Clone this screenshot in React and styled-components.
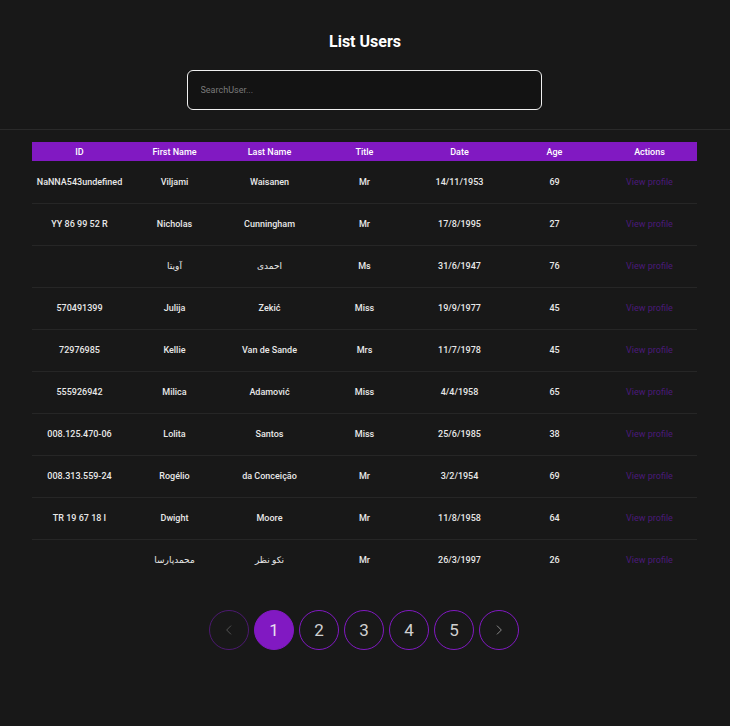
import React from "react";
import styled, { createGlobalStyle } from "styled-components";

const Global = createGlobalStyle`
  html, body { margin: 0; padding: 0; background: #181818; }
  body { font-family: Roboto, "Noto Sans", Arial, sans-serif; color: #fff; }
  * { box-sizing: border-box; }
`;

const Page = styled.div`
  width: 730px;
  min-height: 726px;
  background: #181818;
  display: flex;
  flex-direction: column;
`;

const Header = styled.header`
  display: flex;
  flex-direction: column;
  align-items: center;
  padding-top: 32px;
  padding-bottom: 19px;
  border-bottom: 1px solid #2a2a2a;
`;

const Title = styled.h1`
  margin: 0;
  font-size: 16px;
  line-height: 20px;
  font-weight: 700;
  color: #fff;
`;

const Search = styled.input`
  margin-top: 18px;
  margin-right: 2px;
  width: 355px;
  height: 40px;
  border: 1.5px solid #f0f0f0;
  border-radius: 6px;
  background: #131313;
  color: #ddd;
  padding: 0 13px;
  font-family: Roboto, sans-serif;
  font-size: 9px;
  outline: none;
  &::placeholder { color: #7a7a7a; }
`;

const TableWrap = styled.div`
  padding: 12px 33px 0 32px;
`;

const Table = styled.table`
  width: 665px;
  border-collapse: collapse;
  table-layout: fixed;
`;

const Th = styled.th`
  background: #8119c2;
  color: #fff;
  font-size: 9px;
  font-weight: 500;
  height: 19px;
  padding: 0;
  text-align: center;
`;

const Row = styled.tr`
  border-bottom: 1px solid ${p => (p.$last ? "transparent" : "#262626")};
`;

const Td = styled.td`
  height: 42px;
  padding: 0;
  text-align: center;
  font-size: 9px;
  font-weight: 500;
  color: #e8e8e8;
  font-family: Roboto, "Noto Sans", "DejaVu Sans", sans-serif;
`;

const ProfileLink = styled.a`
  color: #4b1a7a;
  font-size: 9px;
  font-weight: 400;
  text-decoration: none;
  cursor: pointer;
`;

const Pager = styled.nav`
  display: flex;
  justify-content: center;
  gap: 5px;
  margin-top: 28px;
  padding-right: 2px;
`;

const PageBtn = styled.button`
  width: 40px;
  height: 40px;
  border-radius: 50%;
  border: 1px solid ${p => (p.$dim ? "#4c1870" : "#8119c2")};
  background: ${p => (p.$active ? "#8119c2" : "transparent")};
  color: ${p => (p.$active ? "#e8e0f0" : "#d0d0d0")};
  font-family: Roboto, sans-serif;
  font-size: 17px;
  display: flex;
  align-items: center;
  justify-content: center;
  padding: 0;
  cursor: pointer;
`;

const users = [
  ["NaNNA543undefined", "Viljami", "Waisanen", "Mr", "14/11/1953", "69"],
  ["YY 86 99 52 R", "Nicholas", "Cunningham", "Mr", "17/8/1995", "27"],
  ["", "آویتا", "احمدی", "Ms", "31/6/1947", "76"],
  ["570491399", "Julija", "Zekić", "Miss", "19/9/1977", "45"],
  ["72976985", "Kellie", "Van de Sande", "Mrs", "11/7/1978", "45"],
  ["555926942", "Milica", "Adamović", "Miss", "4/4/1958", "65"],
  ["008.125.470-06", "Lolita", "Santos", "Miss", "25/6/1985", "38"],
  ["008.313.559-24", "Rogélio", "da Conceição", "Mr", "3/2/1954", "69"],
  ["TR 19 67 18 I", "Dwight", "Moore", "Mr", "11/8/1958", "64"],
  ["", "محمدپارسا", "نکو نظر", "Mr", "26/3/1997", "26"],
];

const Chevron = ({ dir, color }) => (
  <svg width="14" height="14" viewBox="0 0 24 24" fill="none" stroke={color} strokeWidth="1.5" strokeLinecap="round" strokeLinejoin="round">
    {dir === "left" ? <path d="M15 5l-7 7 7 7" /> : <path d="M9 5l7 7-7 7" />}
  </svg>
);

export default function App() {
  return (
    <Page>
      <Global />
      <Header>
        <Title>List Users</Title>
        <Search placeholder="SearchUser..." />
      </Header>
      <TableWrap>
        <Table>
          <thead>
            <tr>
              {["ID", "First Name", "Last Name", "Title", "Date", "Age", "Actions"].map(h => (
                <Th key={h}>{h}</Th>
              ))}
            </tr>
          </thead>
          <tbody>
            {users.map((u, i) => (
              <Row key={i} $last={i === users.length - 1}>
                {u.map((c, j) => (
                  <Td key={j}>{c}</Td>
                ))}
                <Td>
                  <ProfileLink>View profile</ProfileLink>
                </Td>
              </Row>
            ))}
          </tbody>
        </Table>
      </TableWrap>
      <Pager>
        <PageBtn $dim><Chevron dir="left" color="#5a5a5a" /></PageBtn>
        {[1, 2, 3, 4, 5].map(n => (
          <PageBtn key={n} $active={n === 1}>{n}</PageBtn>
        ))}
        <PageBtn><Chevron dir="right" color="#9a9a9a" /></PageBtn>
      </Pager>
    </Page>
  );
}
